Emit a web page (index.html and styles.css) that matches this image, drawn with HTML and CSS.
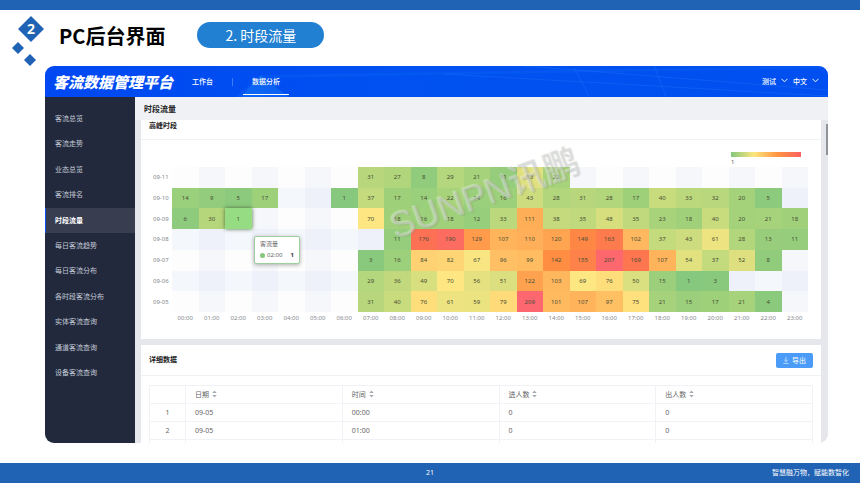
FILE: index.html
```html
<!DOCTYPE html>
<html lang="zh-CN">
<head>
<meta charset="utf-8">
<title>PC后台界面</title>
<link rel="stylesheet" href="styles.css">
</head>
<body>
<div class="topbar"></div>
<header class="slide-head">
  <svg class="diamonds" width="36" height="52" viewBox="0 0 36 52" aria-hidden="true">
    <path d="M19 10 32 23 19 36 6 23Z" transform="translate(0 -10)" fill="#2063b5"/>
    <path d="M6 26 12 32 6 38 0 32Z" fill="#2063b5"/>
    <path d="M18 38 24 44 18 50 12 44Z" fill="#2063b5"/>
    <text x="19" y="18" text-anchor="middle" class="diamond-num">2</text>
  </svg>
  <h1>PC后台界面</h1>
  <span class="pill">2. 时段流量</span>
</header>

<main class="app">
  <div class="app-head">
    <svg class="rays" viewBox="0 0 784 31" preserveAspectRatio="none" aria-hidden="true">
      <path d="M196 31 216 9 244 31Z" fill="#1b7df5" opacity=".45"/>
      <path d="M190 31 216 9 784 0V2L216 12 220 31Z" fill="#1478f8" opacity=".2"/>
      <path d="M400 8 784 30M480 0 784 24M530 2 545 31M610 0 622 31" stroke="#3b92ff" fill="none" opacity=".22"/>
    </svg>
    <strong class="brand">客流数据管理平台</strong>
    <nav class="tabs">
      <a href="#">工作台</a>
      <i class="divider"></i>
      <a href="#" class="on">数据分析</a>
    </nav>
    <div class="menus">
      <button type="button">测试<svg width="7" height="5" viewBox="0 0 7 5"><path d="M.5.8 3.500 3.800 6.500.8"/></svg></button>
      <button type="button">中文<svg width="7" height="5" viewBox="0 0 7 5"><path d="M.5.8 3.500 3.800 6.500.8"/></svg></button>
    </div>
  </div>
  <div class="app-body">
    <nav class="side">
      <a href="#">客流总览</a>
      <a href="#">客流走势</a>
      <a href="#">业态总览</a>
      <a href="#">客流排名</a>
      <a href="#" class="on">时段流量</a>
      <a href="#">每日客流趋势</a>
      <a href="#">每日客流分布</a>
      <a href="#">各时段客流分布</a>
      <a href="#">实体客流查询</a>
      <a href="#">通道客流查询</a>
      <a href="#">设备客流查询</a>
    </nav>
    <div class="content">
      <h2 class="page-title">时段流量</h2>
      <div class="scroll">
        <section class="card">
          <h3 class="peak-title">高峰时段</h3>
          <div class="chart">
            <div class="legend"><div class="ramp"></div><span>1</span></div>
            <div class="heat" id="heat"></div>
            <div class="tooltip"><div>客流量</div><div class="tip-row"><i></i><span>02:00</span><b>1</b></div></div>
            <div class="mark">SUNPN讯鹏</div>
          </div>
        </section>
        <section class="card detail">
          <div class="detail-head">
            <h3>详细数据</h3>
            <button type="button" class="export"><svg width="6" height="7" viewBox="0 0 6 7"><path d="M3 0V4.500M1.200 2.800 3 4.600 4.800 2.800M.3 6.400H5.700"/></svg>导出</button>
          </div>
          <table>
            <colgroup><col class="c-num"><col><col><col><col></colgroup>
            <thead><tr><th></th>
              <th>日期 <svg width="5" height="8" viewBox="0 0 5 8"><path d="M.3 3 2.500.6 4.700 3ZM.3 5 2.500 7.400 4.700 5Z"/></svg></th>
              <th>时间 <svg width="5" height="8" viewBox="0 0 5 8"><path d="M.3 3 2.500.6 4.700 3ZM.3 5 2.500 7.400 4.700 5Z"/></svg></th>
              <th>进人数 <svg width="5" height="8" viewBox="0 0 5 8"><path d="M.3 3 2.500.6 4.700 3ZM.3 5 2.500 7.400 4.700 5Z"/></svg></th>
              <th>出人数 <svg width="5" height="8" viewBox="0 0 5 8"><path d="M.3 3 2.500.6 4.700 3ZM.3 5 2.500 7.400 4.700 5Z"/></svg></th>
            </tr></thead>
            <tbody>
              <tr><td>1</td><td>09-05</td><td>00:00</td><td>0</td><td>0</td></tr>
              <tr><td>2</td><td>09-05</td><td>01:00</td><td>0</td><td>0</td></tr>
              <tr><td></td><td></td><td></td><td></td><td></td></tr>
            </tbody>
          </table>
        </section>
        <i class="thumb"></i>
      </div>
    </div>
  </div>
</main>

<footer class="foot"><span></span><span>21</span><span class="slogan">智慧融万物，赋能数智化</span></footer>
<script src="heat.js"></script>
</body>
</html>
```
FILE: styles.css
```css
* { box-sizing: border-box; }
body {
  margin: 0;
  height: 100vh;
  display: flex;
  flex-direction: column;
  background: #fff;
  color: #333;
  font: 7px/12px "Noto Sans", "Noto Sans CJK SC", sans-serif;
}
h1, h2, h3 { margin: 0; }
a { color: inherit; text-decoration: none; }
button { border: 0; padding: 0; background: none; color: inherit; font: inherit; }

.topbar { height: 10px; flex: none; background: #2063b5; }
.slide-head {
  height: 56px;
  flex: none;
  display: flex;
  align-items: flex-start;
  padding: 6px 12px 0;
}
.diamonds { margin-right: 11px; flex: none; }
.diamond-num { fill: #fff; font: 700 14px "Noto Sans", sans-serif; }
h1 {
  color: #000;
  font: 700 20px/28px "Noto Sans CJK SC", sans-serif;
  margin: 6px 32px 0 0;
}
.pill {
  width: 127px;
  margin-top: 6px;
  border-radius: 13px;
  background: #2280d2;
  color: #fff;
  text-align: center;
  font: 400 14px/26px "Noto Sans CJK SC", sans-serif;
}

.app {
  flex: 1;
  min-height: 0;
  margin: 0 32px 20px 45px;
  border-radius: 9px;
  overflow: hidden;
  display: flex;
  flex-direction: column;
  background: #eff1f5;
}
.app-head {
  position: relative;
  height: 31px;
  flex: none;
  display: flex;
  align-items: center;
  padding: 0 9px 0 8px;
  background: linear-gradient(90deg, #0048f2, #0052f0 50%, #004ff0);
  color: #fff;
  font-weight: 500;
}
.rays { position: absolute; inset: 0; width: 100%; height: 100%; }
.brand {
  position: relative;
  font: italic 900 15px/24px "Noto Sans CJK SC", sans-serif;
}
.tabs { position: relative; display: flex; align-items: center; margin-left: 19px; height: 28px; }
.tabs a { height: 27px; line-height: 27px; }
.tabs .divider { width: 1px; height: 8px; margin: 0 10px 0 19px; background: #3d7cf5; }
.tabs .on { padding: 0 9px; border-bottom: 1px solid #fff; }
.menus { position: relative; margin-left: auto; display: flex; gap: 5px; }
.menus svg { margin-left: 5px; fill: none; stroke: #fff; vertical-align: 1px; }

.app-body { flex: 1; min-height: 0; display: flex; }
.side {
  width: 90px;
  flex: none;
  padding-top: 9px;
  background: #22293d;
  color: #c3cad6;
  display: grid;
  grid-template-rows: repeat(11, 1fr) 57px;
}
.side a { padding-left: 10px; display: flex; align-items: center; }
.side .on { background: #383d50; color: #fff; font-weight: 700; box-shadow: inset 1px 0 #0a53f0; }

.content { flex: 1; min-width: 0; display: flex; flex-direction: column; }
.page-title { height: 23px; flex: none; padding-left: 9px; font-size: 8px; line-height: 23px; color: #222; }
.scroll { position: relative; flex: 1; min-height: 0; overflow: hidden; padding: 0 7px 0 6px; background: #e6e7ec; }
.card { background: #fff; }
.card h3 { font-size: 7px; color: #222; }
.peak-title { height: 20px; padding-left: 8px; border-bottom: 1px solid #f1f2f4; }
.chart { position: relative; height: 199px; padding: 12px 13px 0 12px; }
.legend { width: 70px; margin: 0 7px 0 auto; height: 15px; color: #555; font-size: 6px; line-height: 8px; }
.ramp { height: 5px; margin-bottom: 1px; background: linear-gradient(90deg, #84c87e, #fee67e 33%, #ff9440 66%, #fb6260); }

.heat {
  display: grid;
  grid-template-columns: 19px repeat(24, 1fr);
  grid-template-rows: repeat(7, 1fr) 12px;
  height: 157px;
  font-size: 6px;
  color: #85878d;
}
.heat > * { display: flex; align-items: center; justify-content: center; }
.heat .day { justify-content: flex-start; }
.heat .val { color: #474d35; }
.heat .blank { background: #fdfdfe; }
.heat .odd { background: #f6f7fb; }
.heat .band { background: #f4f7fc; }
.heat .band.odd { background: #eef1fa; }
.heat .picked { z-index: 1; background: #96dc82; box-shadow: 0 0 4px #4b6b3d; }

.tooltip {
  position: absolute;
  left: 113px;
  top: 96px;
  z-index: 3;
  width: 46px;
  padding: 2px 5px;
  border: 1px solid #9ccf9d;
  border-radius: 2px;
  background: #fff;
  box-shadow: 0 1px 4px #aaa;
  color: #666;
  font-size: 6px;
  line-height: 11px;
}
.tip-row { display: flex; align-items: center; }
.tip-row i { width: 5px; height: 5px; margin-right: 2px; border-radius: 50%; background: #84c87e; }
.tip-row b { margin-left: auto; color: #333; }
.mark {
  position: absolute;
  left: 245px;
  top: 30px;
  z-index: 2;
  font: 500 36px/48px "Liberation Sans", "Noto Sans CJK SC", sans-serif;
  color: rgba(205, 208, 205, .4);
  text-shadow: 1px 1px 1px rgba(120, 125, 120, .22), -1px -1px 1px rgba(255, 255, 255, .3);
  transform: rotate(-20deg);
  white-space: nowrap;
  pointer-events: none;
}

.detail { margin-top: 6px; min-height: 100px; }
.detail-head {
  height: 31px;
  display: flex;
  align-items: center;
  justify-content: space-between;
  padding: 0 8px;
  border-bottom: 1px solid #f1f2f4;
}
.export {
  width: 37px;
  height: 15px;
  border-radius: 2px;
  background: #4a9cf8;
  color: #fff;
  line-height: 15px;
}
.export svg { margin-right: 3px; fill: none; stroke: #fff; stroke-width: .6; vertical-align: -1px; }
table { margin: 9px 8px 0; width: calc(100% - 16px); table-layout: fixed; border-collapse: collapse; color: #666; }
.c-num { width: 36px; }
th, td { height: 18px; padding: 0 0 0 9px; border: 1px solid #f1f2f5; text-align: left; font-weight: 400; line-height: 12px; }
td:first-child { padding: 0; text-align: center; }
th svg { fill: #a5a9b0; vertical-align: -1px; margin-left: 1px; }
.thumb { position: absolute; right: 0; top: 4px; width: 2px; height: 31px; background: #90939b; }

.foot {
  height: 20px;
  flex: none;
  display: grid;
  grid-template-columns: 1fr auto 1fr;
  align-items: center;
  padding: 0 11px;
  background: #2063b5;
  color: #fff;
}
.slogan { text-align: right; }
```
FILE: heat.js
```js
const rows = [
  ['09-11', 7, [31, 27, 8, 29, 21, 11, 53, 22]],
  ['09-10', 0, [14, 9, 5, 17, null, null, 1, 37, 17, 14, 22, 14, 16, 43, 28, 31, 28, 17, 40, 33, 32, 20, 5]],
  ['09-09', 0, [6, 30, 1, null, null, null, null, 70, 18, 16, 18, 12, 33, 111, 38, 35, 48, 35, 23, 18, 40, 20, 21, 18]],
  ['09-08', 8, [11, 176, 190, 129, 107, 110, 120, 149, 163, 102, 37, 43, 61, 28, 13, 11]],
  ['09-07', 7, [3, 16, 84, 82, 67, 96, 99, 142, 155, 207, 169, 107, 54, 37, 52, 8]],
  ['09-06', 7, [29, 36, 49, 70, 56, 51, 122, 103, 69, 76, 50, 15, 1, 3]],
  ['09-05', 7, [31, 40, 76, 61, 59, 79, 209, 101, 107, 97, 75, 21, 15, 17, 21, 4]]
];
const stops = [
  [1, [134, 200, 126]], [18, [160, 209, 122]], [40, [200, 219, 125]],
  [70, [254, 231, 130]], [100, [255, 186, 96]], [142, [255, 141, 66]],
  [176, [252, 112, 84]], [209, [253, 103, 112]]
];
function shade(v) {
  let i = 1;
  while (i < stops.length - 1 && v > stops[i][0]) i++;
  const [a, ca] = stops[i - 1], [b, cb] = stops[i];
  const t = (v - a) / (b - a);
  return `rgb(${ca.map((c, k) => Math.round(c + (cb[k] - c) * t)).join(',')})`;
}
const heat = document.getElementById('heat');
function add(cls, text) {
  const el = document.createElement('span');
  el.className = cls;
  el.textContent = text;
  heat.append(el);
  return el;
}
rows.forEach(([day, start, values], r) => {
  add('day', day);
  for (let h = 0; h < 24; h++) {
    const v = values[h - start];
    if (v == null) {
      add('blank' + (r % 2 ? ' band' : '') + (h % 2 ? ' odd' : ''), '');
    } else if (r === 2 && h === 2) {
      add('val picked', v);
    } else {
      add('val', v).style.background = shade(v);
    }
  }
});
add('day', '');
for (let h = 0; h < 24; h++) add('hour', String(h).padStart(2, '0') + ':00');
```
